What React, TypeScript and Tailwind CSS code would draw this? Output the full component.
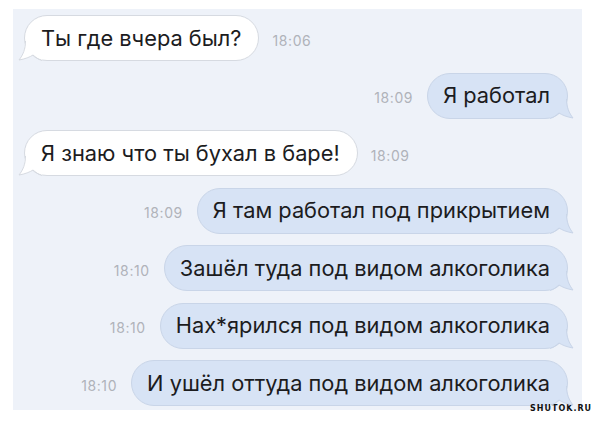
import React from "react";

type Msg = { text: string; time: string; out: boolean };

const msgs: Msg[] = [
  { text: "Ты где вчера был?", time: "18:06", out: false },
  { text: "Я работал", time: "18:09", out: true },
  { text: "Я знаю что ты бухал в баре!", time: "18:09", out: false },
  { text: "Я там работал под прикрытием", time: "18:09", out: true },
  { text: "Зашёл туда под видом алкоголика", time: "18:10", out: true },
  { text: "Нах*ярился под видом алкоголика", time: "18:10", out: true },
  { text: "И ушёл оттуда под видом алкоголика", time: "18:10", out: true },
];

function TailIn() {
  return (
    <svg className="absolute left-[-7px] bottom-[-1px] z-10" width="24" height="20" viewBox="0 0 24 20">
      <path d="M7 0 C7 8 5 14 1 19 C7 18 12 16 15 14 L24 19 L24 0 Z" fill="#ffffff" />
      <path d="M7.5 0 C7.5 8 5 14 1 19 C7 18 12 16 15 14 C17 15.5 19.5 18.5 24 19.5" fill="none" stroke="#d6dae1" strokeWidth="1" />
    </svg>
  );
}

function TailOut() {
  return (
    <svg className="absolute right-[-7px] bottom-[-1px] z-10" width="24" height="20" viewBox="0 0 24 20">
      <path d="M17 0 C17 8 19 14 23 19 C17 18 12 16 9 14 L0 19 L0 0 Z" fill="#d7e3f5" />
      <path d="M16.5 0 C16.5 8 19 14 23 19 C17 18 12 16 9 14 C7 15.5 4.5 18.5 0 19.5" fill="none" stroke="#c9d5e8" strokeWidth="1" />
    </svg>
  );
}

const font = { fontFamily: "Inter, 'Liberation Sans', sans-serif" };

function Bubble({ m }: { m: Msg }) {
  if (m.out) {
    return (
      <div className="flex items-center justify-end h-[46px] pr-[14px]">
        <span className="text-[14px] text-[#b0b3ba] mr-[14px] mt-[4px] tracking-[0.6px]" style={font}>
          {m.time}
        </span>
        <div className="relative h-[46px] rounded-[23px] bg-[#d7e3f5] border border-[#c9d5e8] flex items-center pl-[15px] pr-[17px]">
          <span className="relative z-20 text-[21.8px] text-[#1c1c1e] whitespace-nowrap" style={font}>
            {m.text}
          </span>
          <TailOut />
        </div>
      </div>
    );
  }
  return (
    <div className="flex items-center justify-start h-[46px] pl-[11px]">
      <div className="relative h-[46px] rounded-[23px] bg-white border border-[#d6dae1] flex items-center pl-[16px] pr-[17px]">
        <span className="relative z-20 text-[21.8px] text-[#1c1c1e] whitespace-nowrap" style={font}>
          {m.text}
        </span>
        <TailIn />
      </div>
      <span className="text-[14px] text-[#b0b3ba] ml-[13px] mt-[4px] tracking-[0.6px]" style={font}>
        {m.time}
      </span>
    </div>
  );
}

export default function App() {
  return (
    <div className="relative w-[600px] h-[423px] bg-white overflow-hidden">
      <div className="ml-[13px] mt-[9px] w-[569px] h-[401px] bg-[#eef2f9] flex flex-col gap-[11.5px] pt-[6px]">
        {msgs.map((m, i) => (
          <Bubble key={i} m={m} />
        ))}
      </div>
      <div
        className="absolute left-[530px] top-[403px] text-[8px] font-bold tracking-[1px] text-[#111]"
        style={{ fontFamily: "'DejaVu Sans', sans-serif" }}
      >
        SHUTOK.RU
      </div>
    </div>
  );
}
